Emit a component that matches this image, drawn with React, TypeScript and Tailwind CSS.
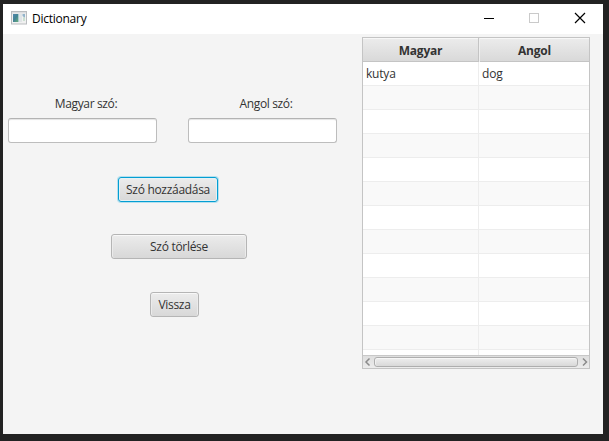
const words = [{ magyar: "kutya", angol: "dog" }];
const ROWS = 13;

const buttonBase =
  "flex h-[25px] items-center justify-center rounded-[3px] border bg-linear-to-b from-[#ececec] to-[#d8d8d8] p-0 leading-none tracking-[-0.3px]";

function TitleBar() {
  return (
    <header className="flex h-[30px] items-start bg-white text-black">
      <svg className="mt-[7px] ml-2 h-[14px] w-[16px] shrink-0" viewBox="0 0 16 14">
        <defs>
          <linearGradient id="pane" x1="0" y1="0" x2="1" y2="1">
            <stop offset="0" stopColor="#5388ad" />
            <stop offset="0.5" stopColor="#438395" />
            <stop offset="1" stopColor="#69ad7a" />
          </linearGradient>
        </defs>
        <rect x="0.5" y="0.5" width="15" height="12.5" fill="#f1f1f1" stroke="#b9bcbf" />
        <rect x="1" y="1" width="14" height="1.5" fill="#dcdde0" />
        <rect x="2" y="3" width="5" height="8" fill="url(#pane)" />
        <rect x="7" y="3" width="1" height="8" fill="#a9cbd0" />
        <rect x="8" y="3" width="3" height="8" fill="#e0e4e7" />
        <path d="M11.5 3H14v4l-2.5-2Z" fill="#93b4cb" />
        <path d="M12 6l2 1v3h-2Z" fill="#c9dfd0" />
      </svg>
      <h1 className="mt-[7px] ml-[5px] w-[60px] text-[12px] leading-4 tracking-[-0.25px]">Dictionary</h1>
      <div className="ml-auto flex">
        <svg className="h-[30px] w-[120px]" viewBox="0 0 120 30" fill="none" shapeRendering="crispEdges">
          <path d="M1 14.5h10" stroke="#000" />
          <rect x="46.500" y="9.500" width="9" height="9" stroke="#cacaca" />
          <path d="M92 9l10 10M102 9l-10 10" stroke="#000" strokeWidth="1.2" shapeRendering="auto" />
        </svg>
      </div>
    </header>
  );
}

function Field({ label }: { label: string }) {
  return (
    <label className="flex w-[149px] flex-col items-center">
      <span className="mb-[6px] h-4 pl-[7px] leading-4 tracking-[-0.35px] whitespace-nowrap">{label}</span>
      <input className="h-[25px] w-full rounded-[3px] border border-[#bdbdbd] border-t-[#b3b3b3] bg-white px-2 shadow-[inset_0_2px_1px_-1px_#e4e4e4] outline-none" />
    </label>
  );
}

function WordForm() {
  return (
    <section className="flex w-[359px] flex-col pt-[62px]">
      <div className="flex gap-[31px] pl-[5px]">
        <Field label="Magyar szó:" />
        <Field label="Angol szó:" />
      </div>
      <button className={`${buttonBase} mt-[34px] ml-[115px] w-[100px] border-[#039ed3] shadow-[inset_0_0_0_1px_#e6f1f4,0_0_0_1px_#b5e0ee]`}>
        Szó hozzáadása
      </button>
      <button className={`${buttonBase} mt-[32px] ml-[108px] w-[136px] border-[#b5b5b5] shadow-[inset_0_1px_0_#f8f8f8,inset_1px_0_0_#ebebeb,inset_-1px_0_0_#ebebeb]`}>Szó törlése</button>
      <button className={`${buttonBase} mt-[33px] ml-[147px] w-[49px] border-[#b5b5b5] shadow-[inset_0_1px_0_#f8f8f8,inset_1px_0_0_#ebebeb,inset_-1px_0_0_#ebebeb]`}>Vissza</button>
    </section>
  );
}

function ScrollBar() {
  return (
    <div className="flex h-[12px] shrink-0 items-center bg-linear-to-b from-[#dedede] to-[#ececec]">
      <svg className="h-[12px] w-[11px]" viewBox="0 0 11 12" fill="none" stroke="#8b8b8b" strokeWidth="1.5">
        <path d="M6.500 2.500L3 6l3.500 3.500" />
      </svg>
      <div className="h-[10px] w-[204px] rounded-[3px] border border-[#aeaeae] bg-linear-to-b from-[#eeeeee] to-[#d9d9d9] shadow-[inset_0_1px_0_#f7f7f7,inset_1px_0_0_#f0f0f0]" />
      <svg className="h-[12px] w-[11px]" viewBox="0 0 11 12" fill="none" stroke="#8b8b8b" strokeWidth="1.5">
        <path d="M5 2.500l3.500 3.500L5 9.500" />
      </svg>
    </div>
  );
}

function WordTable() {
  return (
    <section className="mt-[3px] flex h-[332px] w-[228px] flex-col border border-[#c4c4c4] bg-white">
      <div className="grid h-6 shrink-0 grid-cols-[116px_110px] border-b border-[#c4c4c4] bg-linear-to-b from-[#ececec] to-[#d9d9d9] text-center font-bold leading-6 tracking-[-0.2px] shadow-[inset_0_1px_0_#f7f7f7]">
        <div className="border-r border-[#c4c4c4] pt-px">Magyar</div>
        <div className="border-l border-[#efefef] pt-px">Angol</div>
      </div>
      <div className="min-h-0 flex-1 overflow-hidden border-b border-[#c8c8c8] tracking-[-0.2px]">
        {Array.from({ length: ROWS }, (_, i) => (
          <div
            key={i}
            className="grid h-6 grid-cols-[116px_110px] border-b border-[#ededed] leading-6 odd:bg-white even:bg-[#f9f9f9]"
          >
            <div className="border-r border-[#ededed] pl-[3px]">{words[i]?.magyar}</div>
            <div className="pl-[3px]">{words[i]?.angol}</div>
          </div>
        ))}
      </div>
      <ScrollBar />
    </section>
  );
}

export default function App() {
  return (
    <div className="h-[441px] w-[609px] overflow-hidden bg-[#222222] pt-1 pl-[3px] font-['Open_Sans','Noto_Sans',sans-serif] text-[12px] text-[#333333]">
      <main className="h-[430px] w-[600px] bg-[#f4f4f4]">
        <TitleBar />
        <div className="flex">
          <WordForm />
          <WordTable />
        </div>
      </main>
    </div>
  );
}
